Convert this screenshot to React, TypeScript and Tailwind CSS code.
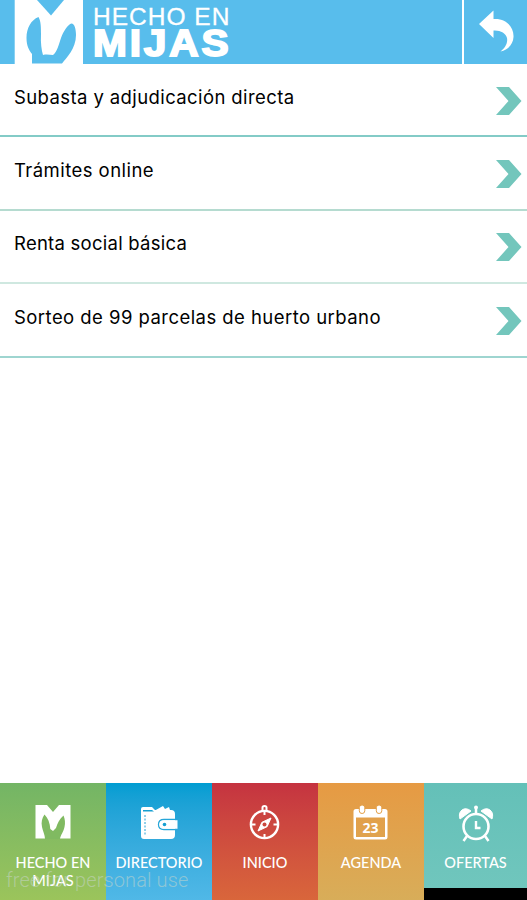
import { ReactNode } from "react";
import clsx from "clsx";

const procedures = [
  { title: "Subasta y adjudicación directa", style: "tracking-[0.4px]", border: "border-[#83cbc7]" },
  { title: "Trámites online", style: "tracking-[0.45px]", border: "border-[#b5dbd0]" },
  { title: "Renta social básica", style: "tracking-[0.25px]", border: "border-[#cfe8e0]" },
  { title: "Sorteo de 99 parcelas de huerto urbano", style: "tracking-[0.45px]", border: "border-[#9ed5d0]" },
];

function HeaderLogo() {
  return (
    <svg width="69" height="64" viewBox="0 0 69 64" className="ml-[14px] shrink-0">
      <rect x="0.7" width="68.3" height="64" fill="#fff" />
      <g fill="#58bdec">
        <path d="M23 0H50L37 15.5Z" />
        <path d="M24.5 17C17 20 12.5 28 12.5 38C12.5 46 15 50 18 54L18 63.5H48C52 58 62 49 62 35C62 29 60.5 23.5 57.5 23.5C54 24 49 32 47 38C45 44 43 52 39 55C36 55 33 54 29 55C27.5 50 26.5 43 27 34C27 28 27 21 24.5 17Z" />
      </g>
    </svg>
  );
}

function BackArrow() {
  return (
    <svg width="36" height="44" viewBox="0 0 36 44" fill="#fff">
      <path d="M0 14L14.5 0.5V9C27 8 35 17 34.5 27C34.2 34 29 40 21.5 41.5C26 38 29 33 28 28C27 23 21 20 14.5 20.5V28Z" />
    </svg>
  );
}

function Chevron() {
  return (
    <svg width="26" height="30" viewBox="0 0 26 30" fill="#73c6bc">
      <path d="M0 1H13L25.5 15L13 29H0L12.5 15Z" />
    </svg>
  );
}

function MijasIcon() {
  return (
    <svg width="36" height="36" viewBox="0 0 36 36">
      <path d="M0.5 0H12L18 7L24 0H35.5V33.5H0.5Z" fill="#fff" />
      <path
        d="M9.5 9.5C7 13 6 17 7 22C7.8 26 10 30 10 34H25C25.5 30 28.5 27 29.5 22C30.5 18 30 14 28.5 10.5C24.5 14 22.5 18 21 23L18 26L15.3 24C15 18 13 13 9.5 9.5Z"
        fill="#80ba61"
      />
    </svg>
  );
}

function WalletIcon() {
  return (
    <svg width="38" height="36" viewBox="0 0 38 36">
      <path d="M14 6L23 1L25 4L29 2L31 8H14Z" fill="#fff" />
      <path d="M3 2H12L15 5H31Q35 5 35 9V30Q35 34 31 34H4Q1 34 1 31V4Q1 2 3 2Z" fill="#fff" />
      <path d="M3 5H12L14 6.5H3Z" fill="#169fd1" />
      <path d="M5 10V31" stroke="#24a2d6" strokeDasharray="2 1.5" />
      <path d="M35 14.5H24Q18.5 14.5 18.5 19.5Q18.5 24.5 24 24.5H35" fill="none" stroke="#26a6d9" strokeWidth="1.3" />
      <path d="M24 15.2H37.5V23.8H24Q19.5 23.8 19.5 19.5Q19.5 15.2 24 15.2Z" fill="#fff" />
      <circle cx="24.5" cy="19.5" r="1.8" fill="#169fd1" />
    </svg>
  );
}

function CompassIcon() {
  return (
    <svg width="36" height="36" viewBox="0 0 36 36" fill="none" stroke="#fff">
      <circle cx="17.5" cy="19.5" r="13.6" strokeWidth="2.4" />
      <path d="M15.5 6V2.5Q15.5 1 17.5 1Q19.5 1 19.5 2.5V6" strokeWidth="2" />
      <path d="M17.5 7V10M17.5 29V33M4 19.5H8.5M26.5 19.5H31" strokeWidth="2" />
      <path d="M24 13L20.1 21.7L11 26L14.9 17.3Z" fill="#fff" strokeWidth="1" />
      <circle cx="17.5" cy="19.5" r="2" fill="#ca473e" stroke="none" />
    </svg>
  );
}

function CalendarIcon() {
  return (
    <div className="relative h-9 w-9">
      <svg width="36" height="36" viewBox="0 0 36 36">
        <path
          fillRule="evenodd"
          d="M3 4H32Q34.5 4 34.5 6.5V32Q34.5 34.5 32 34.5H3Q0.5 34.5 0.5 32V6.5Q0.5 4 3 4ZM3 12.5V32H32V12.5Z"
          fill="#fff"
        />
        <g fill="#fff" stroke="#e39f47">
          <rect x="6.3" y="0" width="5.5" height="8.5" rx="2.7" />
          <rect x="23.3" y="0" width="5.5" height="8.5" rx="2.7" />
        </g>
      </svg>
      <span className="absolute inset-x-0 top-[15px] -ml-[1px] text-center font-['Open_Sans',sans-serif] text-[14px] leading-[15px] font-bold">
        23
      </span>
    </div>
  );
}

function ClockIcon() {
  return (
    <svg width="36" height="38" viewBox="0 0 36 38" fill="none" stroke="#fff">
      <circle cx="18" cy="21.5" r="12.5" strokeWidth="2.6" />
      <path d="M2 14Q0 8 4 5Q8 2 13 6Z M34 14Q36 8 32 5Q28 2 23 6Z" fill="#fff" strokeWidth="1" />
      <path d="M18 4V9M9 31L5.5 36M27 31L30.5 36" strokeWidth="2.5" />
      <circle cx="18" cy="2.5" r="2" fill="#fff" stroke="none" />
      <path d="M18 16V23H22.5" strokeWidth="2.4" />
    </svg>
  );
}

type TabProps = {
  label: ReactNode;
  icon: ReactNode;
  className: string;
};

function Tab({ label, icon, className }: TabProps) {
  return (
    <button
      type="button"
      className={clsx("flex flex-col items-center pt-[22px] text-white", className)}
    >
      <span className="flex h-[38px] items-start">{icon}</span>
      <span className="mt-[11px] text-center text-[14.5px] leading-[18px] font-medium whitespace-nowrap">
        {label}
      </span>
    </button>
  );
}

export default function App() {
  return (
    <div className="relative flex h-[900px] w-[527px] flex-col overflow-hidden bg-white font-['Lato',sans-serif]">
      <header className="flex h-16 shrink-0 bg-[#58bdec] text-white">
        <HeaderLogo />
        <div className="ml-[10px] flex-1 pt-[5px] font-['Liberation_Sans',sans-serif] whitespace-nowrap">
          <div className="text-[24.5px] leading-[24px] tracking-[1px] [-webkit-text-stroke:0.3px_white]">
            HECHO EN
          </div>
          <div className="origin-left scale-x-[1.13] text-[36px] leading-[30px] font-bold tracking-[2.5px] [-webkit-text-stroke:1.8px_white]">
            MIJAS
          </div>
        </div>
        <button type="button" className="flex w-[65px] border-l-2 border-white pt-[10px] pl-[15px]">
          <BackArrow />
        </button>
      </header>

      <main className="flex-1">
        {procedures.map((item) => (
          <a
            key={item.title}
            className={clsx("flex h-[73.4px] items-center justify-between border-b-2 pr-[5px] pl-[14px]", item.border)}
          >
            <span className={clsx("pb-[6px] font-['Inter',sans-serif] text-[18.5px] leading-6 text-black", item.style)}>
              {item.title}
            </span>
            <span className="pt-[2px]">
              <Chevron />
            </span>
          </a>
        ))}
      </main>

      <nav className="grid h-[117px] shrink-0 grid-cols-[106px_106px_106px_106px_103px] bg-black">
        <Tab
          label={<>HECHO EN<br />MIJAS</>}
          icon={<MijasIcon />}
          className="bg-linear-to-b from-[#73b565] to-[#9bc45b]"
        />
        <Tab label="DIRECTORIO" icon={<WalletIcon />} className="bg-linear-to-b from-[#009dd2] to-[#50b8e7]" />
        <Tab label="INICIO" icon={<CompassIcon />} className="bg-linear-to-b from-[#c53340] to-[#d9663b]" />
        <Tab label="AGENDA" icon={<CalendarIcon />} className="bg-linear-to-b from-[#e69a43] to-[#d8ad59]" />
        <Tab label="OFERTAS" icon={<ClockIcon />} className="h-[105px] bg-linear-to-b from-[#64c0b8] to-[#70c6bd]" />
      </nav>

      <span className="absolute bottom-[8px] left-[6px] font-['Roboto',sans-serif] text-[20px] leading-6 font-light tracking-[0.1px] whitespace-nowrap text-[#c8d5cb]/55">
        free for personal use
      </span>
    </div>
  );
}
